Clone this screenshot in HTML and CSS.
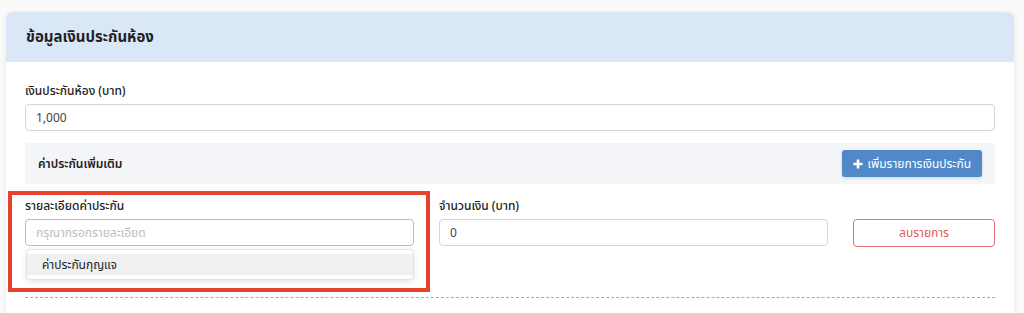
FILE: index.html
```html
<!DOCTYPE html>
<html lang="th">
<head>
    <meta charset="UTF-8">
    <meta name="viewport" content="width=device-width, initial-scale=1.0">
    <title>ข้อมูลเงินประกันห้อง</title>
    <link rel="stylesheet" href="styles.css">
</head>
<body>
    <div class="card">
        <div class="card-header">ข้อมูลเงินประกันห้อง</div>
        <div class="card-body">
            <label class="label">เงินประกันห้อง (บาท)</label>
            <input class="input" type="text" value="1,000">

            <div class="extra">
                <span class="extra-title">ค่าประกันเพิ่มเติม</span>
                <button class="btn-add">
                    <svg width="10" height="10" viewBox="0 0 10 10"><path d="M5 0.5v9M0.5 5h9" stroke="#fff" stroke-width="2.6"/></svg>
                    เพิ่มรายการเงินประกัน
                </button>
            </div>

            <div class="row">
                <div class="field field-detail">
                    <label class="label">รายละเอียดค่าประกัน</label>
                    <input class="input input-focus" type="text" placeholder="กรุณากรอกรายละเอียด">
                    <div class="dropdown">
                        <div class="dropdown-item">ค่าประกันกุญแจ</div>
                    </div>
                    <div class="highlight"></div>
                </div>
                <div class="field">
                    <label class="label">จำนวนเงิน (บาท)</label>
                    <input class="input" type="text" value="0">
                </div>
                <div class="field field-action">
                    <button class="btn-delete">ลบรายการ</button>
                </div>
            </div>

            <div class="divider"></div>
        </div>
    </div>
</body>
</html>
```

FILE: styles.css
```css
body {
    margin: 0;
    background: #fafafa;
    font-family: "Noto Sans", "Noto Sans Thai", sans-serif;
    color: #222;
}
.card {
    margin: 12px 10px 0 6px;
    background: #fff;
    border-radius: 6px 6px 0 0;
    box-shadow: 0 1px 6px rgba(0, 0, 0, 0.08);
    height: 301px;
}
.card-header {
    height: 50px;
    display: flex;
    align-items: center;
    padding: 0 20px;
    background: #dae7f7;
    border-radius: 6px 6px 0 0;
    font-size: 15px;
    font-weight: bold;
}
.card-body {
    padding: 20px 19px 0;
}
.label {
    display: block;
    font-size: 12px;
    font-weight: 500;
    line-height: 18px;
    margin-bottom: 4px;
}
.input {
    display: block;
    box-sizing: border-box;
    width: 100%;
    height: 27px;
    padding: 0 10px;
    border: 1px solid #d5d5d5;
    border-radius: 4px;
    font-family: inherit;
    font-size: 12px;
    color: #444;
    background: #fff;
    outline: none;
}
.input::placeholder {
    color: #bdbdbd;
}
.input-focus {
    border-color: #9cc2ee;
}
.extra {
    margin-top: 12px;
    height: 41px;
    display: flex;
    align-items: center;
    justify-content: space-between;
    padding: 0 13px;
    background: #f3f5f9;
}
.extra-title {
    font-size: 12px;
    font-weight: 600;
}
.btn-add {
    height: 27px;
    padding: 0 11px;
    display: flex;
    align-items: center;
    gap: 5px;
    border: none;
    border-radius: 3px;
    background: #5189c8;
    color: #fff;
    font-family: inherit;
    font-size: 12px;
    box-shadow: 0 1px 3px rgba(0, 0, 0, 0.15);
}
.row {
    margin-top: 13px;
    display: grid;
    grid-template-columns: 389px 389px 1fr;
    column-gap: 25px;
    height: 100px;
}
.field-detail {
    position: relative;
}
.field-action {
    padding-top: 22px;
}
.btn-delete {
    width: 100%;
    height: 28px;
    border: 1px solid #e57373;
    border-radius: 4px;
    background: #fff;
    color: #dc5b55;
    font-family: inherit;
    font-size: 12px;
}
.dropdown {
    position: absolute;
    left: 1px;
    right: 0;
    top: 52px;
    padding: 4px 0;
    background: #fff;
    border: 1px solid #e2e2e2;
    border-radius: 4px;
    box-shadow: 0 2px 6px rgba(0, 0, 0, 0.1);
}
.dropdown-item {
    height: 21px;
    line-height: 21px;
    padding-left: 15px;
    background: #f0f0f0;
    font-size: 12px;
}
.highlight {
    position: absolute;
    left: -17px;
    top: -6px;
    width: 414px;
    height: 93px;
    border: 4px solid #e8412c;
}
.divider {
    border-top: 1px dashed #aaa;
}
```
